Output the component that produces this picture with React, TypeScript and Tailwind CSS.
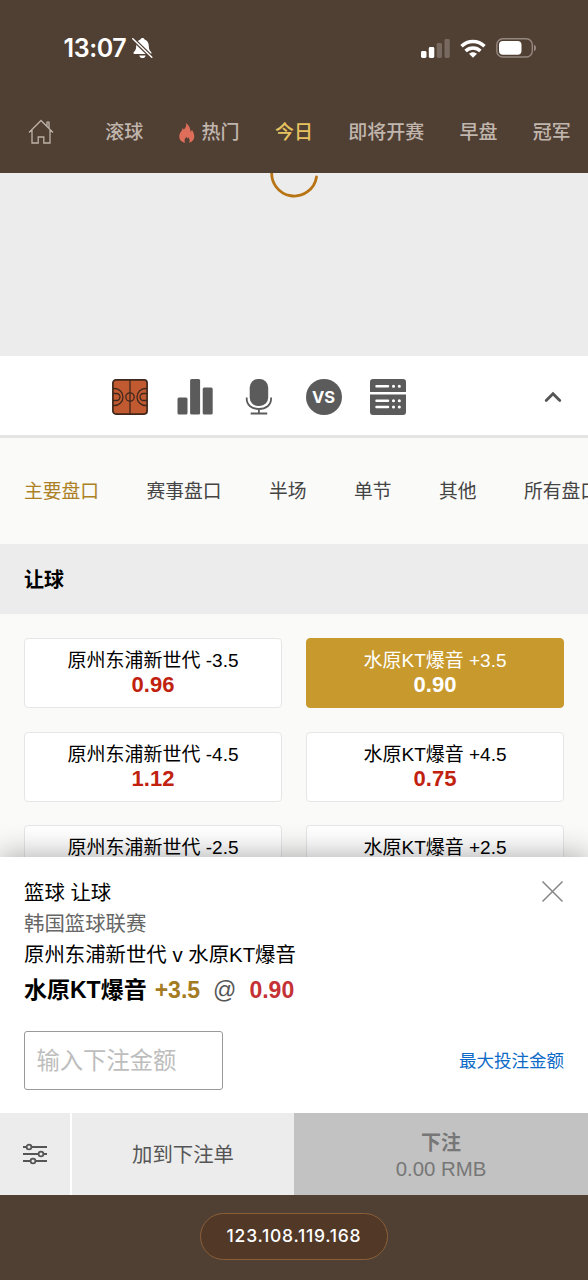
import React, { useState } from 'react';

const navItems = [
  { id: 'live', label: '滚球' },
  { id: 'hot', label: '热门', hot: true },
  { id: 'today', label: '今日' },
  { id: 'soon', label: '即将开赛' },
  { id: 'early', label: '早盘' },
  { id: 'champion', label: '冠军' }
];

const marketTabs = ['主要盘口', '赛事盘口', '半场', '单节', '其他', '所有盘口'];

const odds = [
  { id: 'h35', name: '原州东浦新世代 -3.5', price: '0.96' },
  { id: 'a35', name: '水原KT爆音 +3.5', price: '0.90' },
  { id: 'h45', name: '原州东浦新世代 -4.5', price: '1.12' },
  { id: 'a45', name: '水原KT爆音 +4.5', price: '0.75' },
  { id: 'h25', name: '原州东浦新世代 -2.5' },
  { id: 'a25', name: '水原KT爆音 +2.5' }
];

const StatusBar: React.FC = () => (
  <div className="flex h-24 items-center justify-between pl-[63.5px] pr-[51px]">
    <div className="flex items-center gap-[6px]">
      <span className="font-['Inter','Roboto',sans-serif] text-[25px] leading-8 font-semibold tracking-[-0.4px] text-white">13:07</span>
      <svg width="21" height="22" viewBox="0 0 21 22">
        <path d="M10.5 1c-1.2 0-1.9.7-2.1 1.6C5.5 3.6 4.3 6 4.2 9c-.1 3.2-.6 4.4-2.3 6-.8.8-.6 2 .6 2h16c1.200 0 1.400-1.200.6-2-1.700-1.600-2.200-2.800-2.300-6-.1-3-1.300-5.400-4.200-6.400C12.400 1.700 11.700 1 10.500 1z" fill="#fff" />
        <path d="M7.300 18.400h6.400c-.3 1.600-1.600 2.600-3.200 2.600s-2.900-1-3.200-2.600z" fill="#fff" />
        <path d="M0 1l20.500 20" stroke="#503f33" strokeWidth="3.800" />
        <path d="M.8 1.700l19 18.600" stroke="#fff" strokeWidth="1.500" strokeLinecap="round" />
      </svg>
    </div>
    <div className="flex items-center gap-[10px]">
      <svg width="29" height="19" viewBox="0 0 29 19">
        <rect x="0" y="12" width="5.500" height="7" rx="1.400" fill="#fff" />
        <rect x="7.800" y="8" width="5.500" height="11" rx="1.400" fill="#fff" />
        <rect x="15.700" y="4" width="5.300" height="15" rx="1.400" fill="#77695f" />
        <rect x="23.500" y="0" width="5.300" height="19" rx="1.400" fill="#77695f" />
      </svg>
      <svg width="26" height="19" viewBox="0 0 26 19" fill="none" stroke="#fff" strokeWidth="3.500">
        <path d="M1.500 7.300C8 .8 18 .8 24.500 7.300" />
        <path d="M5.600 11.900c4.200-4 10.600-4 14.800 0" />
        <path d="M13 18.700l-4-3.900c2.200-2.200 5.800-2.200 8 0z" fill="#fff" stroke="none" />
      </svg>
      <svg width="41" height="20" viewBox="0 0 41 20">
        <rect x=".8" y=".8" width="35.500" height="18.200" rx="6" fill="none" stroke="#94887f" strokeWidth="1.400" />
        <rect x="3" y="3" width="22.500" height="13.800" rx="4" fill="#fff" />
        <path d="M38 6.800c2.800 1 2.800 5.400 0 6.400z" fill="#94887f" />
      </svg>
    </div>
  </div>
);

const FlameIcon: React.FC = () => (
  <svg width="16" height="20" viewBox="0 0 16 20" className="shrink-0">
    <path d="M7 0c.7 3-.4 4.600-2.200 6.600-.3-.7-.7-1.200-1.300-1.600C3.600 8 .3 9.300.3 13.400c0 3.500 2.500 5.700 5.900 6.400-1.300-2.300-.7-4 1.300-6 .4 1 .7 1.500 1.300 1.900.2-.6.3-1.100.2-1.800 2 2.100 2 4.100 1 5.900 3.200-.8 5.300-3.200 5.300-6.300 0-3-1.400-4.700-2.200-6.500-.8.7-1.200 1.400-1.400 2.400C11.500 5.700 10.400 2.200 7 0z" fill="#de6e59" />
  </svg>
);

const MatchToolbar: React.FC = () => (
  <div className="flex h-[82px] shrink-0 items-center border-b-3 border-[#e4e4e2] bg-white pl-28 pr-[26px] pt-[3px] text-[#5b5b5b]">
    <div className="flex flex-1 items-center gap-[28.5px]">
      <svg width="36" height="36" viewBox="0 0 36 36" fill="none" stroke="#3e281d" strokeWidth="1.300">
        <rect x=".9" y=".9" width="34.200" height="34.200" rx="3" fill="#c25a31" strokeWidth="1.700" />
        <path d="M18 1v34M1 9.500h1.500a8.500 8.500 0 0 1 0 17H1M1 14.500h3.500a3.500 3.500 0 0 1 0 7H1M35 9.500h-1.500a8.500 8.500 0 0 0 0 17H35M35 14.500h-3.500a3.500 3.500 0 0 0 0 7H35" />
        <circle cx="18" cy="18" r="4.200" />
      </svg>
      <svg width="37" height="36" viewBox="0 0 37 36" fill="currentColor">
        <rect x=".5" y="18.500" width="10" height="17" rx="1.500" />
        <rect x="13.100" y="0" width="10" height="35.500" rx="1.500" />
        <rect x="25.700" y="8.500" width="10" height="27" rx="1.500" />
      </svg>
      <svg width="36" height="36" viewBox="0 0 36 36" className="-ml-px">
        <rect x="8.700" y="0" width="18.500" height="27" rx="8.500" fill="currentColor" />
        <path d="M5.700 18.500v1.300C5.700 26 10.700 30 17.900 30s12.200-4 12.200-10.200v-1.300M17.900 30v4.500M9.700 34.500h16.500" fill="none" stroke="currentColor" strokeWidth="1.800" />
      </svg>
      <div className="flex size-9 items-center justify-center rounded-full bg-[#5b5b5b] font-['Inter',sans-serif] text-[16.5px] font-bold text-white">VS</div>
      <svg width="36" height="36" viewBox="0 0 36 36">
        <path d="M3 0h30a3 3 0 0 1 3 3v10H0V3a3 3 0 0 1 3-3zM0 15.500h36V33a3 3 0 0 1-3 3H3a3 3 0 0 1-3-3z" fill="currentColor" />
        <path d="M6.500 7.200h11.500M6.500 21.700h11.500M6.500 28h11.500" stroke="#fff" strokeWidth="2.500" strokeLinecap="round" />
        <path d="M23.500 7.200h.01M29.300 7.200h.01M23.500 21.700h.01M29.300 21.700h.01M23.500 28h.01M29.300 28h.01" stroke="#fff" strokeWidth="3.100" strokeLinecap="round" />
      </svg>
    </div>
    <svg width="18" height="12" viewBox="0 0 18 12" fill="none" stroke="#555" strokeWidth="2.800" strokeLinecap="round">
      <path d="M2.200 9.500L9 2.700l6.800 6.800" />
    </svg>
  </div>
);

const BetSlip: React.FC = () => {
  const [stake, setStake] = useState('');

  return (
    <div className="relative z-10 flex h-[338px] shrink-0 flex-col bg-white shadow-[0_-2px_28px_rgba(0,0,0,0.32)]">
      <div className="flex h-64 flex-col px-6 pt-[21px]">
        <div className="flex justify-between">
          <div className="text-[20.4px] leading-[31px] text-black">
            <div>篮球 让球</div>
            <div className="text-[#666]">韩国篮球联赛</div>
            <div>原州东浦新世代 v 水原KT爆音</div>
          </div>
          <button className="mt-[2px] size-[23px]">
            <svg width="23" height="23" viewBox="0 0 23 23" fill="none" stroke="#858585" strokeWidth="1.500">
              <path d="M1.500 1.500l20 20M21.500 1.500l-20 20" />
            </svg>
          </button>
        </div>
        <div className="flex h-[39px] items-center text-[23px] font-bold text-black">
          <span>水原KT爆音</span>
          <span className="ml-2 text-[#a47b22]">+3.5</span>
          <span className="ml-[13px] font-normal text-[#555]">@</span>
          <span className="ml-[13px] text-[#c53236]">0.90</span>
        </div>
        <div className="mt-[21px] flex items-center justify-between">
          <input
            value={stake}
            onChange={(e) => setStake(e.target.value)}
            placeholder="输入下注金额"
            className="-ml-[0.5px] h-[59px] w-[199px] rounded-[3px] border border-[#999] bg-white px-3 pt-[2px] text-[23.3px] leading-8 placeholder:text-[#bdbdbd]"
          />
          <button className="pt-px text-[17.5px] text-[#0d6ac7]">最大投注金额</button>
        </div>
      </div>
      <div className="flex h-[82px] bg-[#ececec] text-[20.4px] text-[#555]">
        <button className="flex w-[72px] items-center justify-center border-r-2 border-white">
          <svg width="24" height="22" viewBox="0 0 24 22" fill="none" stroke="currentColor" strokeWidth="1.800">
            <path d="M0 4h3.500M8.500 4H24M0 11h15.500M20.500 11H24M0 18h7.500M12.500 18H24" />
            <circle cx="6" cy="4" r="2.400" />
            <circle cx="18" cy="11" r="2.400" />
            <circle cx="10" cy="18" r="2.400" />
          </svg>
        </button>
        <button className="w-[222px] pt-[2px]">加到下注单</button>
        <button className="flex flex-1 flex-col items-center justify-center bg-[#c2c2c2] pt-[3px] leading-[26px] text-[#777]">
          <span className="text-[20px] font-bold">下注</span>
          <span>0.00 RMB</span>
        </button>
      </div>
    </div>
  );
};

const App: React.FC = () => {
  const [activeNav, setActiveNav] = useState('today');
  const [activeTab, setActiveTab] = useState('主要盘口');
  const [selected, setSelected] = useState('a35');

  return (
    <div className="flex h-[1280px] w-[588px] flex-col overflow-hidden bg-[#fafaf8] font-['Liberation_Sans','Noto_Sans_CJK_SC',sans-serif]">
      <header className="h-[173px] shrink-0 bg-[#503f33]">
        <StatusBar />
        <nav className="flex h-[74px] items-center gap-[35.3px] pl-7 text-[19px] font-medium whitespace-nowrap">
          <svg width="26" height="26" viewBox="0 0 26 26" fill="none" stroke="#bdb2a8" strokeWidth="1.300" className="mr-[16px] -mt-[2px] shrink-0">
            <path d="M1 13.500L13 1.500l12 12M19 7.500V3.200h2v6.300M4 11v13h6.200v-6h5.600v6H22V11" />
          </svg>
          {navItems.map(item => (
            <button
              key={item.id}
              onClick={() => setActiveNav(item.id)}
              className={`flex shrink-0 items-center gap-[7px] ${activeNav === item.id ? 'text-[#e6c35f]' : 'text-[#c0b6ad]'}`}
            >
              {item.hot && <FlameIcon />}
              {item.label}
            </button>
          ))}
        </nav>
      </header>

      <div className="flex h-[183px] shrink-0 justify-center overflow-hidden bg-[#ececec]">
        <svg width="48" height="48" viewBox="0 0 48 48" className="-mt-[21px]" fill="none" stroke="#b87414" strokeWidth="2.800" strokeLinecap="round">
          <path d="M2 18A22.500 22.500 0 1 0 46.500 25" />
        </svg>
      </div>

      <MatchToolbar />

      <div className="flex h-[106px] shrink-0 items-center gap-[47.500px] pt-[2px] pl-6 text-[18.75px] whitespace-nowrap">
        {marketTabs.map(tab => (
          <button key={tab} onClick={() => setActiveTab(tab)} className={`shrink-0 ${activeTab === tab ? 'text-[#ac8125]' : 'text-[#444]'}`}>
            {tab}
          </button>
        ))}
      </div>

      <h2 className="flex h-[70px] shrink-0 items-center bg-[#ececec] pt-[2px] pl-6 text-[20px] font-bold text-black">让球</h2>

      <div className="grid min-h-0 flex-1 auto-rows-[70px] grid-cols-2 gap-x-6 gap-y-[23.7px] overflow-hidden px-6 pt-6">
        {odds.map(o => (
          <button
            key={o.id}
            onClick={() => setSelected(o.id)}
            className={`flex flex-col items-center rounded-[4px] border pt-[10px] text-[19px] leading-6 ${selected === o.id ? 'border-[#c89a2d] bg-[#c89a2d] text-white' : 'border-[#e6e6e6] bg-white text-black'}`}
          >
            <span>{o.name}</span>
            {o.price && <span className={`text-[22px] font-bold ${selected === o.id ? 'text-white' : 'text-[#c12210]'}`}>{o.price}</span>}
          </button>
        ))}
      </div>

      <BetSlip />

      <footer className="relative z-20 flex h-[85px] shrink-0 justify-center bg-[#503f33] pt-[18px]">
        <div className="flex h-[47px] w-[188px] items-center justify-center rounded-full border border-[#8b6039] bg-[#513827] font-['Inter',sans-serif] text-[17.500px] font-medium tracking-[0.75px] text-white">
          123.108.119.168
        </div>
      </footer>
    </div>
  );
};

export default App;
